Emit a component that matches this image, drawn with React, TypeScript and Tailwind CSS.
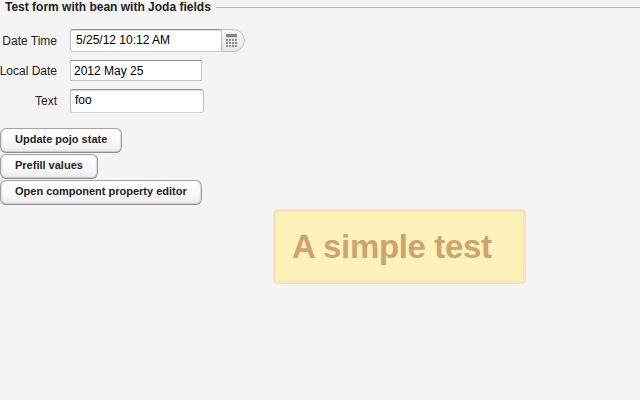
import type { ReactNode } from "react";

function Row({ label, top, labelTop, children }: { label: string; top: string; labelTop: string; children: ReactNode }) {
  return (
    <div className={`flex items-start ${top}`}>
      <label className={`flex w-[57px] shrink-0 justify-end whitespace-nowrap ${labelTop}`}>{label}</label>
      <div className="ml-[13px] flex">{children}</div>
    </div>
  );
}

function CalendarIcon() {
  const cols = [0, 3, 6, 9];
  const rows = [5, 8, 11];
  return (
    <svg width="11" height="13" viewBox="0 0 11 13" shapeRendering="crispEdges">
      <rect width="11" height="3" fill="#808588" />
      <rect y="3" width="11" height="1" fill="#d2d4d5" />
      {rows.map((y) => cols.map((x) => <rect key={`${x}-${y}`} x={x} y={y} width="2" height="2" fill="#8b8f92" />))}
    </svg>
  );
}

function Button({ children, width }: { children: ReactNode; width: string }) {
  return (
    <button
      className={`${width} flex h-[25px] items-center whitespace-nowrap rounded-[6px] border border-[#a4a4a4] border-b-[#8f8f8f] bg-gradient-to-b from-white via-[#fbfbfb] to-[#ececec] pb-[2px] pl-[14px] text-[11px] leading-[13px] font-bold shadow-[inset_0_-1px_1px_#c9c9c9,inset_-1px_0_1px_#d8d8d8,inset_1px_0_1px_#dedede]`}
    >
      {children}
    </button>
  );
}

export default function App() {
  return (
    <main className="relative h-[400px] w-[640px] overflow-hidden bg-[#f4f4f4] font-['Liberation_Sans',Arial,sans-serif] text-[12px] leading-4 text-[#222]">
      <div className="flex h-[14px] items-center pl-[5px]">
        <h1 className="w-[211px] whitespace-nowrap font-bold leading-[14px]">Test form with bean with Joda fields</h1>
        <div className="h-px flex-1 bg-[#bcbcbc]" />
      </div>

      <Row label="Date Time" top="mt-[15px]" labelTop="pt-1">
        <div className="h-[23px] w-[151px] whitespace-nowrap rounded-l-[3px] border border-r-0 border-[#bdbdbd] border-t-[#8f9191] border-b-[#d0d0d0] bg-white pl-[5px] pt-[2px] text-black shadow-[inset_0_1px_0_#dedede]">
          5/25/12 10:12 AM
        </div>
        <button className="flex h-[23px] w-6 items-center rounded-r-full border border-[#bdbdbd] bg-gradient-to-b from-[#f8f8f8] to-[#e8e8e8] pl-1">
          <CalendarIcon />
        </button>
      </Row>

      <Row label="Local Date" top="mt-[8px]" labelTop="pt-[3px]">
        <div className="h-[21px] w-[132px] whitespace-nowrap border border-[#c4c4c4] border-t-[#999] bg-white pl-[3px] pt-[2px] text-black">
          2012 May 25
        </div>
      </Row>

      <Row label="Text" top="mt-[8px]" labelTop="pt-1">
        <div className="h-6 w-[134px] rounded-[3px] border border-[#bdbdbd] border-t-[#8f9191] border-b-[#d0d0d0] bg-white pl-[4px] pt-[2px] text-black shadow-[inset_0_1px_0_#dedede]">
          foo
        </div>
      </Row>

      <div className="mt-[15px] flex flex-col items-start gap-px">
        <Button width="w-[122px]">Update pojo state</Button>
        <Button width="w-[98px]">Prefill values</Button>
        <Button width="w-[202px]">Open component property editor</Button>
      </div>

      <div className="absolute left-[273px] top-[209px] flex h-[75px] w-[253px] items-center rounded-[4px] border-[3px] border-[#fee1b4] bg-[#fdf2ba] pl-[16px]">
        <h2 className="whitespace-nowrap text-[33px] leading-[38px] font-bold tracking-[-0.35px] text-[#cfa36f]">A simple test</h2>
      </div>
    </main>
  );
}
